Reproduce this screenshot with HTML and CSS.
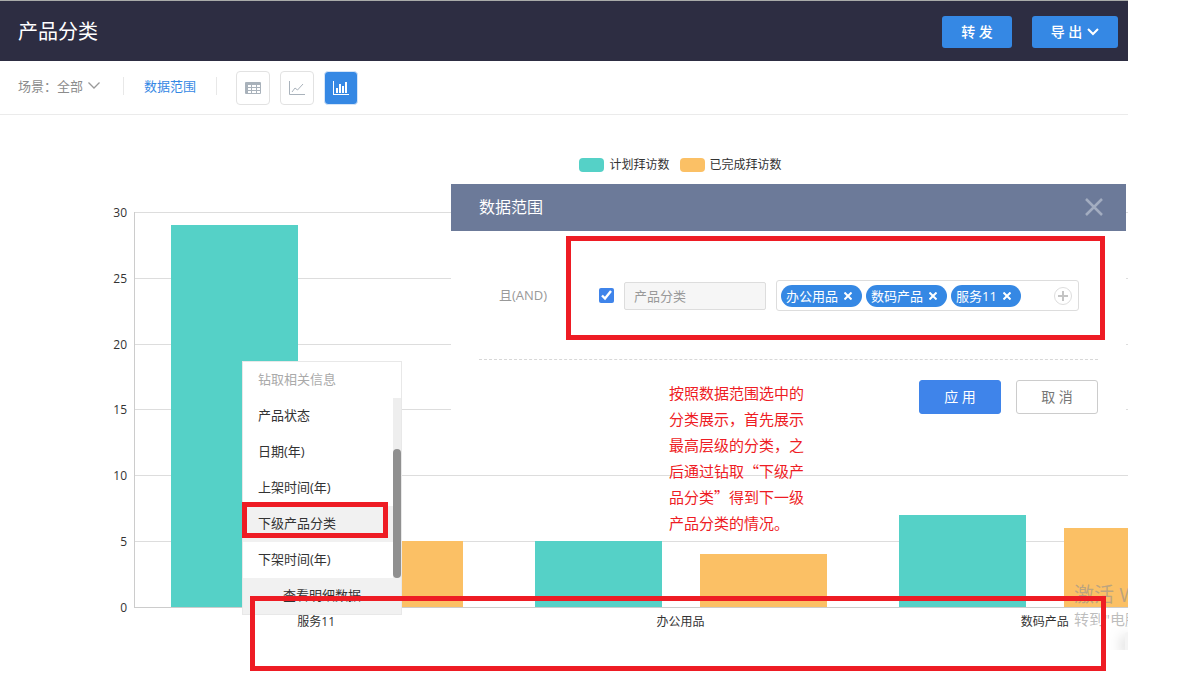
FILE: index.html
```
<!DOCTYPE html>
<html lang="zh-CN">
<head>
<meta charset="utf-8">
<title>产品分类</title>
<link rel="stylesheet" href="styles.css">
</head>
<body>
<div class="page">
  <div class="app">
    <header class="header">
      <h1 class="title">产品分类</h1>
      <button class="btn-head" type="button">转 发</button>
      <button class="btn-head btn-export" type="button">导 出<svg width="12" height="8" viewBox="0 0 12 8" fill="none" stroke="#fff" stroke-width="2"><path d="M1 1l5 5 5-5"/></svg></button>
    </header>

    <nav class="toolbar">
      <button class="scene" type="button">场景：全部<svg width="12" height="7" viewBox="0 0 12 7" fill="none" stroke="#999" stroke-width="1.300"><path d="M.5 .5L6 6 11.500 .5"/></svg></button>
      <a class="range-link" href="#range">数据范围</a>
      <div class="views">
        <button class="view" type="button" aria-label="表格"><svg width="16" height="12" viewBox="0 0 16 12"><rect width="16" height="12" rx="1" fill="#a9b2bb"/><path fill="#fff" d="M3 3h3v2H3zM7 3h4v2H7zM12 3h3v2h-3zM3 6h3v2H3zM7 6h4v2H7zM12 6h3v2h-3zM3 9h3v2H3zM7 9h4v2H7zM12 9h3v2h-3z"/></svg></button>
        <button class="view" type="button" aria-label="折线图"><svg width="16" height="14" viewBox="0 0 16 14" fill="none" stroke="#a9b2bb"><path d="M.5 0v13.500H16"/><path d="M3 11l3-4 2.500 2L14 3"/></svg></button>
        <button class="view view-on" type="button" aria-label="柱状图"><svg width="16" height="14" viewBox="0 0 16 14" fill="#fff"><path d="M0 0h1v13h15v1H0zM3 7h2v5H3zM6 3h2v9H6zM9 5h2v7H9zM12 1h2v11h-2z"/></svg></button>
      </div>
    </nav>

    <main class="chart">
      <div class="legend">
        <span class="key"><i class="swatch teal"></i>计划拜访数</span>
        <span class="key"><i class="swatch amber"></i>已完成拜访数</span>
      </div>
      <div class="plot">
        <div class="y-axis"><span>30</span><span>25</span><span>20</span><span>15</span><span>10</span><span>5</span><span>0</span></div>
        <div class="area">
          <div class="lines"><i></i><i></i><i></i><i></i><i></i><i></i></div>
          <div class="groups">
            <div class="group"><div class="bar teal" style="height:96.67%"></div><div class="bar amber" style="height:16.67%"></div></div>
            <div class="group"><div class="bar teal" style="height:16.67%"></div><div class="bar amber" style="height:13.33%"></div></div>
            <div class="group"><div class="bar teal" style="height:23.33%"></div><div class="bar amber" style="height:20%"></div></div>
          </div>
        </div>
        <div class="x-axis"><span>服务11</span><span>办公用品</span><span>数码产品</span></div>
      </div>
    </main>

    <div class="watermark"><div class="wm-big">激活 W</div><div class="wm-small">转到"电脑</div><div class="wm-card"></div></div>
  </div>

  <section class="dialog" id="range" aria-label="数据范围">
    <header class="dialog-head">
      <h2 class="dialog-title">数据范围</h2>
      <button class="close" type="button" aria-label="关闭"><svg width="18" height="18" viewBox="0 0 18 18" fill="none" stroke="#a3adc0" stroke-width="2.500"><path d="M1 1l16 16M17 1L1 17"/></svg></button>
    </header>
    <div class="condition">
      <span class="logic">且(AND)</span>
      <div class="marked">
        <input class="tick" type="checkbox" checked aria-label="启用条件">
        <input class="field" type="text" value="产品分类" aria-label="字段" readonly>
        <div class="tags">
          <span class="tag">办公用品<button type="button" aria-label="移除"><svg width="8" height="8" viewBox="0 0 8 8" fill="none" stroke="#fff" stroke-width="2"><path d="M.5 .5l7 7M7.500 .5l-7 7"/></svg></button></span>
          <span class="tag">数码产品<button type="button" aria-label="移除"><svg width="8" height="8" viewBox="0 0 8 8" fill="none" stroke="#fff" stroke-width="2"><path d="M.5 .5l7 7M7.500 .5l-7 7"/></svg></button></span>
          <span class="tag">服务11<button type="button" aria-label="移除"><svg width="8" height="8" viewBox="0 0 8 8" fill="none" stroke="#fff" stroke-width="2"><path d="M.5 .5l7 7M7.500 .5l-7 7"/></svg></button></span>
          <button class="add" type="button" aria-label="添加"><svg width="18" height="18" viewBox="0 0 18 18" fill="none"><circle cx="9" cy="9" r="8.500" stroke="#ddd"/><path d="M4 9h10M9 4v10" stroke="#c4c4c4" stroke-width="2"/></svg></button>
        </div>
      </div>
    </div>
    <footer class="actions">
      <button class="action apply" type="button">应 用</button>
      <button class="action" type="button">取 消</button>
    </footer>
  </section>

  <p class="note">按照数据范围选中的分类展示，首先展示最高层级的分类，之后通过钻取“下级产品分类”得到下一级产品分类的情况。</p>

  <div class="menu">
    <div class="menu-title">钻取相关信息</div>
    <div class="menu-body">
      <div class="menu-list">
        <button class="item" type="button">产品状态</button>
        <button class="item" type="button">日期(年)</button>
        <button class="item" type="button">上架时间(年)</button>
        <button class="item item-on" type="button">下级产品分类</button>
        <button class="item" type="button">下架时间(年)</button>
      </div>
      <div class="track"><div class="thumb"></div></div>
    </div>
    <button class="menu-foot" type="button">查看明细数据</button>
    <div class="mark-item"></div>
  </div>

  <div class="mark-axis"></div>
</div>
</body>
</html>
```
FILE: styles.css
```
* { box-sizing: border-box; }
body {
  margin: 0;
  padding-right: 76px;
  background: #fff;
  color: #333;
  font: 13px/18px "Open Sans", "Noto Sans CJK SC", sans-serif;
}
h1, h2, p { margin: 0; font-weight: 400; }
button { padding: 0; border: 0; background: none; color: inherit; font: inherit; cursor: pointer; }
svg { display: block; flex: none; }
.page { position: relative; padding-bottom: 44px; }
.app { position: relative; overflow: hidden; border-top: 1px solid #a9aba9; }

.header { display: flex; align-items: center; gap: 20px; height: 60px; padding: 2px 10px 0 18px; background: #2d2d42; color: #fff; }
.title { flex: 1; font-size: 20px; line-height: 30px; }
.btn-head { display: flex; align-items: center; justify-content: center; gap: 5px; width: 70px; height: 32px; border-radius: 3px; background: #3588e4; font-size: 14px; font-weight: 500; }
.btn-export { width: 86px; }

.toolbar { display: flex; align-items: center; height: 54px; padding: 0 18px; border-bottom: 1px solid #ebebeb; }
.scene, .range-link { margin-bottom: 4px; }
.scene { display: flex; align-items: center; gap: 5px; padding-right: 23px; border-right: 1px solid #e8e8e8; color: #8c8c8c; }
.range-link { padding: 0 20px; border-right: 1px solid #e8e8e8; color: #3588e4; text-decoration: none; }
.views { display: flex; gap: 10px; margin-left: 19px; }
.view { display: grid; place-items: center; width: 34px; height: 34px; border: 1px solid #e2e2e2; border-radius: 4px; background: #fff; }
.view-on { border-color: #d5e5f8; background: #3588e4; }

.chart { width: calc(100% + 233px); padding: 41px 0 19px; font-size: 12px; }
.legend { display: flex; justify-content: center; gap: 10px; }
.key { display: flex; align-items: center; gap: 5px; }
.swatch { width: 25px; height: 14px; border-radius: 4px; }
.teal { background: #55d1c7; }
.amber { background: #fbc065; }
.plot { display: grid; grid-template: 396px auto / 134px 1fr; margin: 38px 134px 0 0; }
.y-axis { display: flex; flex-direction: column; justify-content: space-between; margin: -8px 7px -9px 0; text-align: right; }
.area { display: grid; border: solid #ccc; border-width: 0 0 1px 1px; }
.lines, .groups { grid-area: 1 / 1; display: flex; }
.lines { flex-direction: column; }
.lines i { flex: 1; border-top: 1px solid #ddd; }
.group { flex: 1; display: flex; align-items: flex-end; gap: 38px; padding: 0 36px; }
.bar { flex: 1; }
.x-axis { grid-column: 2; display: flex; padding-top: 5px; text-align: center; }
.x-axis span { flex: 1; }

.watermark { position: absolute; right: 0; bottom: 0; width: 54px; overflow: hidden; white-space: nowrap; color: rgba(145, 145, 145, .6); }
.wm-big { font-size: 20px; line-height: 26px; }
.wm-small { font-size: 15px; line-height: 22px; }
.wm-card { width: 3px; height: 18px; margin: 2px 0 0 auto; border-radius: 3px 0 0; background: #f4f4f4; box-shadow: 0 4px 14px #777; }

.dialog { position: absolute; top: 184px; left: 451px; right: 2px; padding-bottom: 20px; background: #fff; }
.dialog-head { display: flex; align-items: center; justify-content: space-between; height: 47px; padding: 0 23px 2px 28px; background: #6c7a99; color: #fff; }
.dialog-title { font-size: 16px; line-height: 24px; }
.condition { display: flex; padding: 5px 21px 0 48px; }
.logic { display: flex; align-items: center; width: 67px; padding-top: 14px; color: #999; }
.marked { flex: 1; display: flex; align-items: center; gap: 10px; height: 104px; padding: 15px 21px 0 28px; border: 5px solid #ee1c24; }
.tick { width: 15px; height: 15px; margin: 0; accent-color: #3f84ea; }
.field { width: 142px; height: 28px; padding: 0 9px; border: 1px solid #ddd; border-radius: 2px; background: #f6f6f6; color: #999; font: inherit; }
.tags { flex: 1; display: flex; align-items: center; gap: 4px; height: 31px; padding: 0 6px 0 4px; border: 1px solid #ddd; border-radius: 3px; }
.tag { display: flex; align-items: center; gap: 6px; height: 22px; padding: 0 10px 0 5px; border-radius: 11px; background: #3588e4; color: #fff; }
.add { margin-left: auto; }
.actions { display: flex; justify-content: flex-end; gap: 15px; margin: 19px 28px 0; padding-top: 20px; border-top: 1px dashed #d8d8d8; }
.action { width: 82px; height: 34px; border: 1px solid #ccc; border-radius: 3px; color: #777; font-size: 14px; }
.apply { border-color: #3f84ea; background: #3f84ea; color: #fff; }

.note { position: absolute; top: 380px; left: 669px; width: 9em; color: #ee1c24; font: 15px/26px "Noto Sans CJK SC", sans-serif; }

.menu { position: absolute; top: 361px; left: 242px; width: 160px; border: 1px solid #e8e8e8; background: #fff; }
.menu-title, .item, .menu-foot { height: 36px; padding-bottom: 2px; line-height: 34px; }
.menu-title { padding-left: 15px; color: #aaa; }
.menu-body { display: flex; }
.menu-list { flex: 1; }
.item { display: block; width: 100%; padding-left: 15px; text-align: left; }
.item-on, .menu-foot { background: #f1f1f1; }
.track { display: flex; align-items: flex-end; width: 8px; background: #eee; }
.thumb { width: 8px; height: 129px; border-radius: 4px; background: #909090; }
.menu-foot { width: 100%; }
.mark-item { position: absolute; top: 140px; left: -1px; width: 146px; height: 36px; border: 5px solid #ee1c24; }
.mark-axis { position: absolute; top: 596px; left: 250px; right: 22px; height: 75px; border: 5px solid #ee1c24; }
```
